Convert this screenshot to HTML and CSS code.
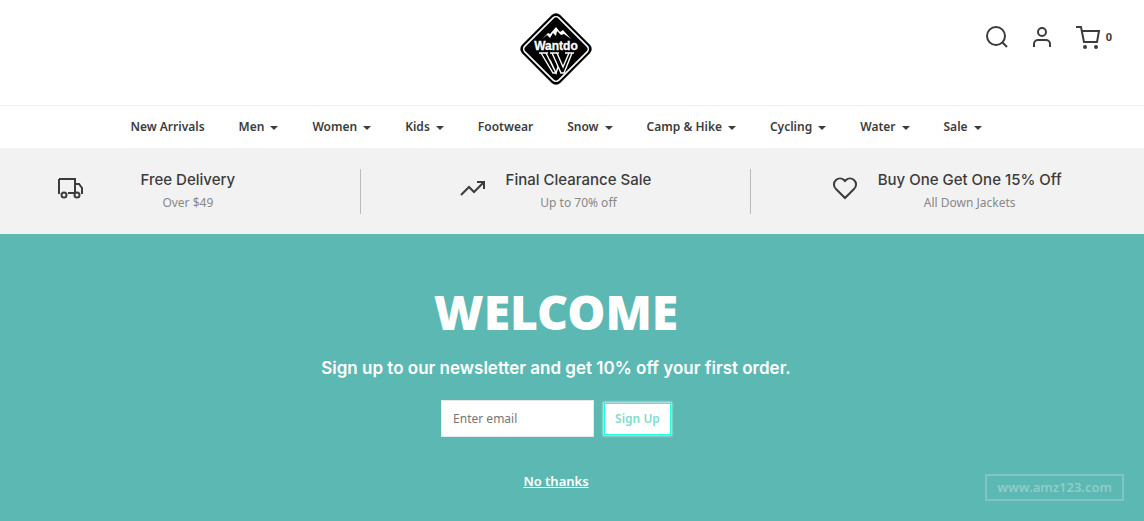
FILE: index.html
```html
<!DOCTYPE html>
<html lang="en">
<head>
    <meta charset="UTF-8">
    <meta name="viewport" content="width=device-width, initial-scale=1.0">
    <title>Wantdo</title>
    <link rel="stylesheet" href="styles.css">
</head>
<body>
    <header class="header">
        <a href="#" class="logo" aria-label="Wantdo">
            <svg width="74" height="74" viewBox="0 0 74 74">
                <rect x="10" y="10" width="54" height="54" rx="6" transform="rotate(45 37 37)" fill="#000"/>
                <rect x="13" y="13" width="48" height="48" rx="4" transform="rotate(45 37 37)" fill="none" stroke="#fff" stroke-width="1.6"/>
                <path d="M23 27l6-6 2 1 6-7 4 5 3-2 8 9-7-5-3 1-4-4-1 5-3-3-3 5-3-3z" fill="#fff"/>
                <text x="37" y="38" text-anchor="middle" class="logo-text">Wantdo</text>
                <path d="M20 41h9M31 41h9M46 41h9" stroke="#fff" stroke-width="1.4"/>
                <path d="M22 41l12 20h3L27 41M33 41l9 20h3l8-20M38 41l6 14 6-14M31 48l6 13 2-6" fill="none" stroke="#fff" stroke-width="1.4"/>
            </svg>
        </a>
        <div class="header-icons">
            <a href="#" aria-label="Search">
                <svg width="24" height="24" viewBox="0 0 24 24"><circle cx="12" cy="11" r="9"/><path d="M18 17l5 5"/></svg>
            </a>
            <a href="#" aria-label="Account">
                <svg width="24" height="24" viewBox="0 0 24 24"><circle cx="12" cy="7" r="4"/><path d="M4 22v-3a4 4 0 0 1 4-4h8a4 4 0 0 1 4 4v3"/></svg>
            </a>
            <a href="#" class="cart" aria-label="Cart">
                <svg width="26" height="24" viewBox="0 0 26 24"><path d="M0 2h5l3 15h13l2-11H6"/><circle cx="9" cy="22" r="1"/><circle cx="20" cy="22" r="1"/></svg>
                <span class="cart-count">0</span>
            </a>
        </div>
    </header>

    <nav class="nav">
        <a href="#">New Arrivals</a>
        <a href="#" class="has-menu">Men</a>
        <a href="#" class="has-menu">Women</a>
        <a href="#" class="has-menu">Kids</a>
        <a href="#">Footwear</a>
        <a href="#" class="has-menu">Snow</a>
        <a href="#" class="has-menu">Camp &amp; Hike</a>
        <a href="#" class="has-menu">Cycling</a>
        <a href="#" class="has-menu">Water</a>
        <a href="#" class="has-menu">Sale</a>
    </nav>

    <section class="promos">
        <div class="promo-row">
            <div class="promo">
                <svg width="26" height="26" viewBox="0 0 26 26"><path d="M2 4h16v14h-7M3 18H2V4M18 9h4l3 4v5h-1M18 18v-9"/><circle cx="7" cy="20" r="2.5"/><circle cx="20" cy="20" r="2.5"/></svg>
                <div class="promo-text">
                    <h3>Free Delivery</h3>
                    <p>Over $49</p>
                </div>
            </div>
            <div class="promo">
                <svg width="26" height="26" viewBox="0 0 26 26"><path d="M1 20l8-8 5 5 10-10M17 7h7v7"/></svg>
                <div class="promo-text">
                    <h3>Final Clearance Sale</h3>
                    <p>Up to 70% off</p>
                </div>
            </div>
            <div class="promo">
                <svg width="26" height="26" viewBox="0 0 26 26"><path d="M22 5a6 6 0 0 0-8 0l-1 1-1-1a6 6 0 0 0-8 0 6 6 0 0 0 0 9l9 9 9-9a6 6 0 0 0 0-9z"/></svg>
                <div class="promo-text">
                    <h3>Buy One Get One 15% Off</h3>
                    <p>All Down Jackets</p>
                </div>
            </div>
        </div>
    </section>

    <main class="welcome">
        <h1>WELCOME</h1>
        <h2>Sign up to our newsletter and get 10% off your first order.</h2>
        <form class="signup">
            <input type="email" placeholder="Enter email" aria-label="Enter email">
            <button type="button">Sign Up</button>
        </form>
        <a href="#" class="no-thanks">No thanks</a>
        <div class="watermark">www.amz123.com</div>
    </main>
</body>
</html>
```
FILE: styles.css
```css
:root {
    --dark: #3c3c3c;
    --teal: #5cb8b2;
    --gutter: 32px;
}

* {
    box-sizing: border-box;
}

body {
    margin: 0;
    min-height: 100vh;
    display: flex;
    flex-direction: column;
    font-family: "Noto Sans", "Open Sans", sans-serif;
    color: var(--dark);
    background: #fff;
}

h1, h2, h3, p {
    margin: 0;
}

a {
    color: inherit;
    text-decoration: none;
}

svg {
    display: block;
}

/* header */
.header {
    display: grid;
    grid-template-columns: 1fr auto 1fr;
    padding: 12px var(--gutter) 19px 0;
    border-bottom: 1px solid #f0f0f0;
}

.logo {
    grid-column: 2;
}

.logo-text {
    font: 900 12px "Liberation Sans", sans-serif;
    fill: #fff;
    stroke: #fff;
    stroke-width: 0.3px;
}

.header-icons {
    display: flex;
    justify-content: flex-end;
    align-items: flex-start;
    gap: 22px;
    padding-top: 13px;
}

.header-icons svg,
.promo svg {
    fill: none;
    stroke: var(--dark);
    stroke-width: 2;
}

.cart {
    display: flex;
    align-items: center;
    gap: 4px;
}

.cart-count {
    font-size: 11px;
    line-height: 24px;
    font-weight: 700;
}

/* menu */
.nav {
    display: flex;
    justify-content: center;
    gap: 34px;
    padding: 0 var(--gutter) 0 0;
    font-size: 12px;
    font-weight: 600;
    line-height: 42px;
    white-space: nowrap;
}

.has-menu::after {
    content: "";
    display: inline-block;
    margin-left: 6px;
    vertical-align: 1px;
    border: 4px solid transparent;
    border-top-color: var(--dark);
    border-bottom: 0;
}

/* promo strip */
.promos {
    padding: 21px var(--gutter) 20px 0;
    background: #f2f2f2;
    overflow: hidden;
}

.promo-row {
    display: grid;
    grid-template-columns: repeat(3, 1fr);
    margin: 0 -30px;
}

.promo {
    display: flex;
    justify-content: center;
    gap: 20px;
    height: 45px;
    border-right: 1px solid #bbb;
}

.promo:last-child {
    border-right: 0;
}

.promo svg {
    margin-top: 6px;
}

.promo-text {
    text-align: center;
    white-space: nowrap;
}

.promo:first-child .promo-text {
    min-width: 170px;
}

.promo h3 {
    font-family: Inter, sans-serif;
    font-size: 15px;
    line-height: 22px;
    font-weight: 500;
}

.promo p {
    font-size: 12px;
    line-height: 24px;
    color: #888;
}

/* newsletter */
.welcome {
    position: relative;
    flex: 1;
    display: flex;
    flex-direction: column;
    align-items: center;
    padding: 48px var(--gutter) 28px 0;
    background: var(--teal);
    color: #fff;
}

.welcome h1 {
    font-size: 48px;
    line-height: 60px;
    font-weight: 900;
}

.welcome h2 {
    margin: 14px 0 20px;
    font-family: Inter, sans-serif;
    font-size: 17px;
    line-height: 24px;
    font-weight: 600;
}

.signup {
    display: flex;
    align-items: center;
    gap: 10px;
}

.signup input {
    width: 153px;
    height: 37px;
    padding: 0 11px;
    border: 1px solid #e8e8e8;
    font: 12px "Noto Sans", sans-serif;
}

.signup input::placeholder {
    color: #757575;
}

.signup button {
    height: 32px;
    padding: 0 10px;
    border: 1px solid #1fffe0;
    background: #fff;
    box-shadow: 0 0 2px 1px #d0f5ef;
    color: #7fdccb;
    font: 600 12px "Noto Sans", sans-serif;
}

.no-thanks {
    margin-top: 34px;
    font-size: 13px;
    line-height: 20px;
    font-weight: 600;
    text-decoration: underline;
}

.watermark {
    position: absolute;
    right: 20px;
    bottom: 20px;
    padding: 0 10px;
    border: 2px solid #7dc6c1;
    color: #8fcdc9;
    font-size: 13px;
    line-height: 23px;
    font-weight: 600;
}
```
